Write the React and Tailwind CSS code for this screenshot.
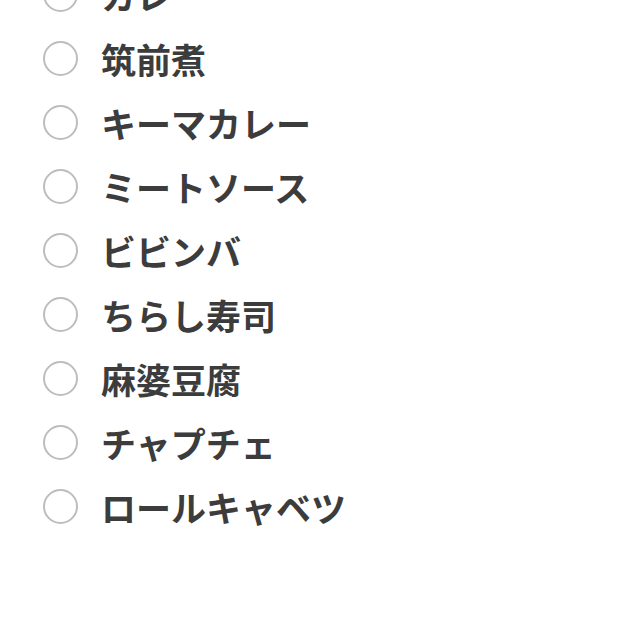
import React from 'react';

const items = [
  'カレー',
  '筑前煮',
  'キーマカレー',
  'ミートソース',
  'ビビンバ',
  'ちらし寿司',
  '麻婆豆腐',
  'チャプチェ',
  'ロールキャベツ',
];

function App() {
  return (
    <div
      className="w-[640px] h-[640px] overflow-hidden bg-white"
      style={{ fontFamily: '"Noto Sans CJK JP", "Noto Sans", sans-serif' }}
    >
      <ul className="-mt-[38px] pl-[43px]">
        {items.map((item) => (
          <li key={item} className="flex items-center h-16 gap-[23px]">
            <span className="w-[35px] h-[35px] rounded-full border-[2.5px] border-[#bdbdbd] shrink-0" />
            <span className="text-[35px] leading-none font-semibold text-[#3c3c3c]">{item}</span>
          </li>
        ))}
      </ul>
    </div>
  );
}

export default App;
